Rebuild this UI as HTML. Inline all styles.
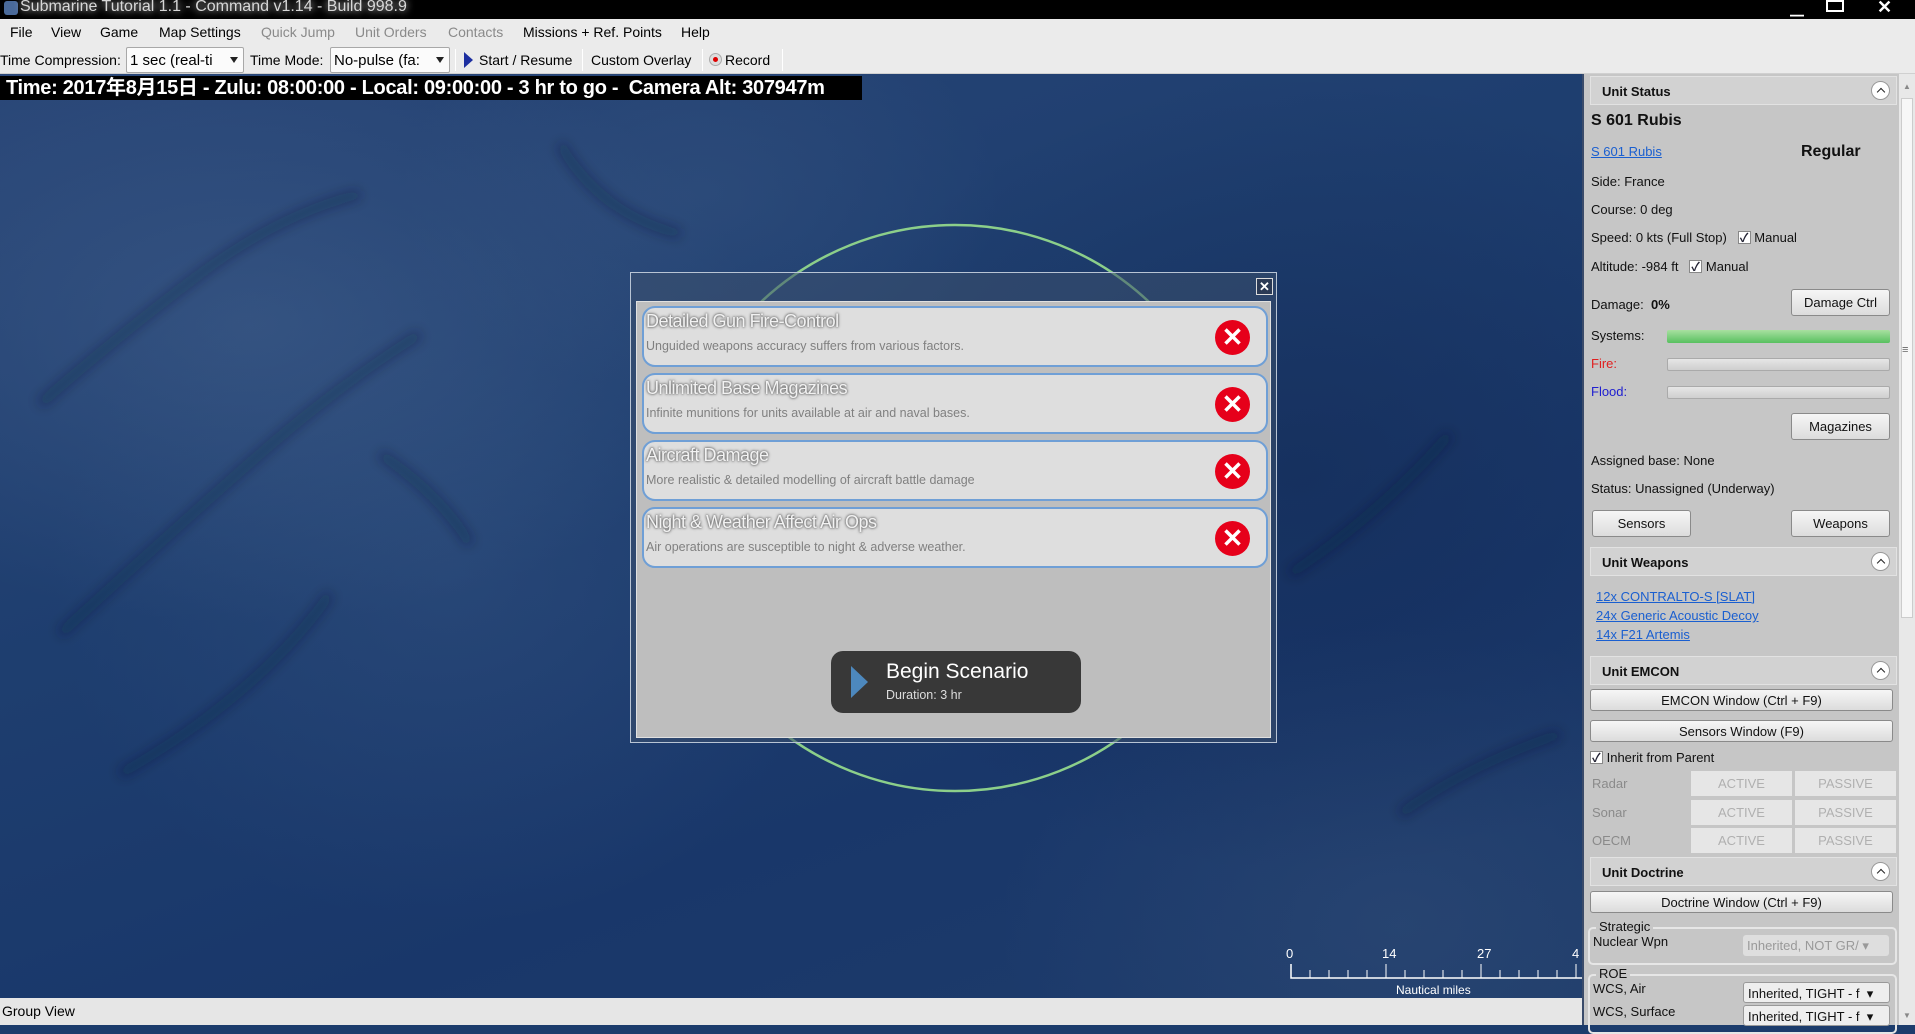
<!DOCTYPE html>
<html><head><meta charset="utf-8"><style>
*{margin:0;padding:0;box-sizing:border-box}
body{width:1915px;height:1025px;overflow:hidden;position:relative;font-family:"Liberation Sans","Noto Sans CJK JP",sans-serif;background:#1c3c6c}
.a{position:absolute;white-space:nowrap}
#title{left:0;top:0;width:1915px;height:19px;background:#000}
#menu{left:0;top:19px;width:1915px;height:27px;background:#ebebeb;font-size:14px;color:#000}
#menu span{position:absolute;top:5px}
.dis{color:#8a8a8a}
#tool{left:0;top:46px;width:1915px;height:28px;background:#ebebeb;font-size:14px;border-bottom:1px solid #d0d0d0}
.combo{position:absolute;top:1px;height:26px;background:#fbfbfb;border:1px solid #a8a8a8;border-radius:2px;font-size:15px;padding:4px 3px;overflow:hidden}
.combo i{position:absolute;right:5px;top:9px;border-left:4px solid transparent;border-right:4px solid transparent;border-top:6px solid #222}
.sep{position:absolute;top:3px;width:1px;height:22px;background:#c8c8c8;border-right:1px solid #fff}
#map{left:0;top:74px;width:1582px;height:924px;overflow:hidden;
background:
radial-gradient(ellipse 500px 300px at 250px 250px,rgba(90,120,160,.3),transparent),
radial-gradient(ellipse 400px 350px at 450px 500px,rgba(70,100,145,.25),transparent),
radial-gradient(ellipse 300px 200px at 700px 120px,rgba(80,110,150,.2),transparent),
radial-gradient(ellipse 500px 400px at 1300px 400px,rgba(15,35,75,.4),transparent),
radial-gradient(ellipse 400px 300px at 1400px 850px,rgba(70,95,130,.25),transparent),
linear-gradient(160deg,#294677 0%,#1e3e6f 40%,#19376a 70%,#1e3c6b 100%)}
#panel{left:1582px;top:74px;width:317px;height:951px;background:#c6c6c6;font-size:13px;color:#111;border-left:2px solid #3a4b6a}
#sb{left:1899px;top:74px;width:16px;height:951px;background:#e8e8e8}
.hdr{position:absolute;left:6px;width:307px;height:29px;background:#d2d2d2;border:1px solid #e2e2e2;font-weight:bold;font-size:13px;padding:7px 0 0 11px}
.hdr b{position:absolute;right:6px;top:4px;width:19px;height:19px;border-radius:50%;background:#fff;border:1px solid #999}
.hdr b:after{content:"";position:absolute;left:6px;top:7px;width:5px;height:5px;border-left:1.5px solid #222;border-top:1.5px solid #222;transform:rotate(45deg)}
.t{position:absolute;font-size:13px}
.btn{position:absolute;background:linear-gradient(#f6f6f6,#dcdcdc);border:1px solid #8a8a8a;border-radius:3px;font-size:13px;text-align:center}
.lnk{color:#1a5fd0;text-decoration:underline}
.cb{display:inline-block;width:13px;height:13px;border:1px solid #888;background:#fff;vertical-align:-2px;position:relative}
.cb:after{content:"✓";position:absolute;left:1px;top:-3px;font-size:12px;color:#223;font-weight:bold}
.em{position:absolute;width:101px;height:25px;background:#e6e6e6;color:#b0b0b0;font-size:13px;text-align:center;padding-top:5px}
.gray{color:#8a8a8a}
.dd{position:absolute;height:21px;border-radius:3px;font-size:13px;padding:3px 4px;overflow:hidden}
#status{left:0;top:998px;width:1582px;height:27px;background:#e6e6e6;font-size:14px;padding:5px 0 0 2px}
#dlg{left:630px;top:272px;width:647px;height:471px;border:1px solid #b8c4d4;background:rgba(60,80,110,.55)}
#inner{position:absolute;left:5px;top:28px;width:635px;height:437px;background:#bebebe;border:1px solid #e0e0e0}
.row{position:absolute;left:5px;width:626px;height:61px;background:#dedede;border:2px solid #6f9fd6;border-radius:13px}
.row .h{position:absolute;left:2px;top:3px;font-size:18px;color:#f2f2f2;text-shadow:0 0 2px #555,0 0 3px #777;letter-spacing:-.5px}
.row .d{position:absolute;left:2px;top:31px;font-size:12.5px;color:#808080}
.row .x{position:absolute;right:16px;top:12px;width:35px;height:35px;border-radius:50%;background:#e6001a;color:#fff;font-size:26px;font-weight:bold;text-align:center;line-height:34px}
</style></head><body>
<div id="title" class="a"><span class="a" style="left:4px;top:1px;width:14px;height:14px;background:#4a6a9a;border-radius:3px"></span><span class="a" style="left:20px;top:-2px;font-size:16px;color:#d8d8d8;text-shadow:0 0 8px #fff">Submarine Tutorial 1.1 - Command v1.14 - Build 998.9</span>
<span class="a" style="left:1790px;top:0;color:#fff;font-size:14px">▁</span><span class="a" style="left:1826px;top:0;width:18px;height:12px;border:2px solid #fff"></span><span class="a" style="left:1877px;top:-3px;color:#fff;font-size:18px;font-weight:bold">✕</span></div>
<div id="menu" class="a"><span style="left:10px">File</span><span style="left:51px">View</span><span style="left:100px">Game</span><span style="left:159px">Map Settings</span><span class="dis" style="left:261px">Quick Jump</span><span class="dis" style="left:355px">Unit Orders</span><span class="dis" style="left:448px">Contacts</span><span style="left:523px">Missions + Ref. Points</span><span style="left:681px">Help</span></div>
<div id="tool" class="a">
<span class="a" style="left:0;top:6px">Time Compression:</span>
<div class="combo" style="left:126px;width:118px">1 sec (real-ti<i></i></div>
<span class="a" style="left:250px;top:6px">Time Mode:</span>
<div class="combo" style="left:330px;width:120px">No-pulse (fa:<i></i></div>
<div class="sep" style="left:455px"></div>
<span class="a" style="left:464px;top:6px;border-top:8px solid transparent;border-bottom:8px solid transparent;border-left:9px solid #1d2fa0"></span>
<span class="a" style="left:479px;top:6px">Start / Resume</span>
<div class="sep" style="left:582px"></div>
<span class="a" style="left:591px;top:6px">Custom Overlay</span>
<div class="sep" style="left:702px"></div>
<span class="a" style="left:709px;top:7px;width:13px;height:13px;border-radius:50%;background:#ddd;border:1px solid #aaa"></span><span class="a" style="left:713px;top:11px;width:5px;height:5px;border-radius:50%;background:#d00"></span>
<span class="a" style="left:725px;top:6px">Record</span>
<div class="sep" style="left:782px"></div>
</div>
<div id="map" class="a">
<svg width="1582" height="924" style="position:absolute;left:0;top:0">
<defs><filter id="bl"><feGaussianBlur stdDeviation="6"/></filter></defs>
<g stroke="rgba(10,25,55,.35)" stroke-width="10" fill="none" filter="url(#bl)">
<path d="M40 330 Q120 260 200 200 T360 120"/><path d="M60 560 Q180 450 260 380 T420 260"/>
<path d="M120 700 Q260 620 330 520"/><path d="M560 70 Q600 140 680 160"/><path d="M380 380 Q440 420 470 470"/>
<path d="M1290 500 Q1380 440 1450 360"/><path d="M1400 740 Q1470 690 1560 660"/>
</g>
<circle cx="955" cy="434" r="283" fill="none" stroke="#8ccf8a" stroke-width="2.5"/>
</svg>
<div class="a" style="left:0;top:2px;width:862px;height:24px;background:#000;color:#fff;font-weight:bold;font-size:20px;padding:0 0 0 6px;line-height:24px;letter-spacing:-.3px">Time: 2017年8月15日 - Zulu: 08:00:00 - Local: 09:00:00 - 3 hr to go -&nbsp; Camera Alt: 307947m</div>
<div class="a" style="left:1286px;top:872px;color:#fff;font-size:13px">0</div>
<div class="a" style="left:1382px;top:872px;color:#fff;font-size:13px">14</div>
<div class="a" style="left:1477px;top:872px;color:#fff;font-size:13px">27</div>
<div class="a" style="left:1572px;top:872px;color:#fff;font-size:13px">4</div>
<svg class="a" style="left:1290px;top:890px" width="292" height="16"><path d="M1 0V14H292" stroke="#fff" stroke-width="1.5" fill="none"/><g stroke="#fff">
<path d="M20 6V14M39 6V14M58 6V14M77 6V14M96 0V14M115 6V14M134 6V14M153 6V14M172 6V14M191 0V14M210 6V14M229 6V14M248 6V14M267 6V14M286 0V14"/></g></svg>
<div class="a" style="left:1396px;top:909px;color:#fff;font-size:12px">Nautical miles</div>
</div>
<div id="dlg" class="a">
<div class="a" style="left:625px;top:5px;width:17px;height:17px;border:1px solid #ddd;background:#2b3a55;color:#fff;font-size:13px;text-align:center;line-height:15px;font-weight:bold">✕</div>
<div id="inner">
<div class="row" style="top:4px"><span class="h">Detailed Gun Fire-Control</span><span class="d">Unguided weapons accuracy suffers from various factors.</span><span class="x">✕</span></div>
<div class="row" style="top:71px"><span class="h">Unlimited Base Magazines</span><span class="d">Infinite munitions for units available at air and naval bases.</span><span class="x">✕</span></div>
<div class="row" style="top:138px"><span class="h">Aircraft Damage</span><span class="d">More realistic &amp; detailed modelling of aircraft battle damage</span><span class="x">✕</span></div>
<div class="row" style="top:205px"><span class="h">Night &amp; Weather Affect Air Ops</span><span class="d">Air operations are susceptible to night &amp; adverse weather.</span><span class="x">✕</span></div>
<div class="a" style="left:194px;top:349px;width:250px;height:62px;background:#383838;border-radius:12px">
<span class="a" style="left:20px;top:15px;border-top:16px solid transparent;border-bottom:16px solid transparent;border-left:17px solid #4d88bd"></span>
<span class="a" style="left:55px;top:9px;color:#fff;font-size:21px">Begin Scenario</span>
<span class="a" style="left:55px;top:37px;color:#ddd;font-size:12.5px">Duration: 3 hr</span></div>
</div></div>
<div id="status" class="a">Group View</div>
<div id="panel" class="a">
<div class="hdr" style="top:2px">Unit Status<b></b></div>
<div class="t" style="left:7px;top:38px;font-size:16px;font-weight:bold">S 601 Rubis</div>
<div class="t lnk" style="left:7px;top:70px">S 601 Rubis</div>
<div class="t" style="left:217px;top:69px;font-size:16px;font-weight:bold">Regular</div>
<div class="t" style="left:7px;top:100px">Side: France</div>
<div class="t" style="left:7px;top:128px">Course: 0 deg</div>
<div class="t" style="left:7px;top:156px">Speed: 0 kts (Full Stop)&nbsp;&nbsp; <span class="cb"></span> Manual</div>
<div class="t" style="left:7px;top:185px">Altitude: -984 ft&nbsp;&nbsp; <span class="cb"></span> Manual</div>
<div class="t" style="left:7px;top:223px">Damage:&nbsp; <b>0%</b></div>
<div class="btn" style="left:207px;top:215px;width:99px;height:27px;padding-top:5px">Damage Ctrl</div>
<div class="t" style="left:7px;top:254px">Systems:</div>
<div class="a" style="left:83px;top:256px;width:223px;height:13px;background:linear-gradient(#a8e0a0,#58c060);border-radius:2px"></div>
<div class="t" style="left:7px;top:282px;color:#e02020">Fire:</div>
<div class="a" style="left:83px;top:284px;width:223px;height:13px;background:linear-gradient(#e6e6e6,#cfcfcf);border:1px solid #aaa;border-radius:2px"></div>
<div class="t" style="left:7px;top:310px;color:#2020d0">Flood:</div>
<div class="a" style="left:83px;top:312px;width:223px;height:13px;background:linear-gradient(#e6e6e6,#cfcfcf);border:1px solid #aaa;border-radius:2px"></div>
<div class="btn" style="left:207px;top:339px;width:99px;height:27px;padding-top:5px">Magazines</div>
<div class="t" style="left:7px;top:379px">Assigned base: None</div>
<div class="t" style="left:7px;top:407px">Status: Unassigned (Underway)</div>
<div class="btn" style="left:8px;top:436px;width:99px;height:27px;padding-top:5px">Sensors</div>
<div class="btn" style="left:207px;top:436px;width:99px;height:27px;padding-top:5px">Weapons</div>
<div class="hdr" style="top:473px">Unit Weapons<b></b></div>
<div class="t lnk" style="left:12px;top:515px">12x CONTRALTO-S [SLAT]</div>
<div class="t lnk" style="left:12px;top:534px">24x Generic Acoustic Decoy</div>
<div class="t lnk" style="left:12px;top:553px">14x F21 Artemis</div>
<div class="hdr" style="top:582px">Unit EMCON<b></b></div>
<div class="btn" style="left:6px;top:615px;width:303px;height:22px;padding-top:3px">EMCON Window (Ctrl + F9)</div>
<div class="btn" style="left:6px;top:646px;width:303px;height:22px;padding-top:3px">Sensors Window (F9)</div>
<div class="t" style="left:6px;top:676px"><span class="cb"></span> Inherit from Parent</div>
<div class="t gray" style="left:8px;top:702px">Radar</div><div class="em" style="left:107px;top:697px">ACTIVE</div><div class="em" style="left:211px;top:697px">PASSIVE</div>
<div class="t gray" style="left:8px;top:731px">Sonar</div><div class="em" style="left:107px;top:726px">ACTIVE</div><div class="em" style="left:211px;top:726px">PASSIVE</div>
<div class="t gray" style="left:8px;top:759px">OECM</div><div class="em" style="left:107px;top:754px">ACTIVE</div><div class="em" style="left:211px;top:754px">PASSIVE</div>
<div class="hdr" style="top:783px">Unit Doctrine<b></b></div>
<div class="btn" style="left:6px;top:817px;width:303px;height:22px;padding-top:3px">Doctrine Window (Ctrl + F9)</div>
<div class="a" style="left:4px;top:853px;width:309px;height:38px;border:2px solid #e6e6e6;border-radius:5px"></div>
<div class="t" style="left:12px;top:845px;background:#c6c6c6;padding:0 3px">Strategic</div>
<div class="t" style="left:9px;top:860px">Nuclear Wpn</div>
<div class="dd" style="left:159px;top:861px;width:146px;background:#dedede;color:#999">Inherited, NOT GR/ ▾</div>
<div class="a" style="left:4px;top:900px;width:309px;height:60px;border:2px solid #e6e6e6;border-radius:5px"></div>
<div class="t" style="left:12px;top:892px;background:#c6c6c6;padding:0 3px">ROE</div>
<div class="t" style="left:9px;top:907px">WCS, Air</div>
<div class="dd" style="left:159px;top:908px;width:147px;background:#eee;border:1px solid #999">Inherited, TIGHT - f&nbsp;&nbsp;▾</div>
<div class="t" style="left:9px;top:930px">WCS, Surface</div>
<div class="dd" style="left:159px;top:931px;width:147px;background:#eee;border:1px solid #999">Inherited, TIGHT - f&nbsp;&nbsp;▾</div>
</div>
<div id="sb" class="a"><div class="a" style="left:2px;top:24px;width:12px;height:520px;background:#f7f7f7;border:1px solid #ccc"></div>
<div class="a" style="left:4px;top:8px;color:#888;font-size:8px">▲</div><div class="a" style="left:3px;top:270px;color:#666;font-size:11px">≡</div><div class="a" style="left:4px;top:937px;color:#888;font-size:8px">▼</div></div>
</body></html>
